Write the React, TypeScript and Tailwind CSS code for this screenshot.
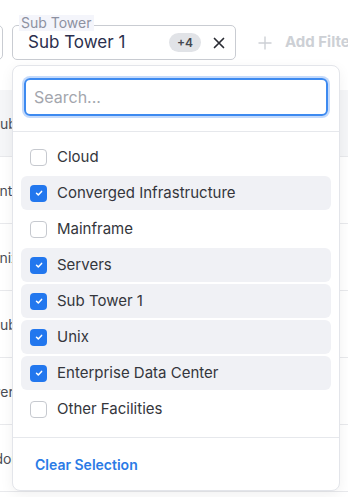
import { useState } from 'react';

const options = [
  'Cloud',
  'Converged Infrastructure',
  'Mainframe',
  'Servers',
  'Sub Tower 1',
  'Unix',
  'Enterprise Data Center',
  'Other Facilities',
];

// filas de la tabla que queda detrás del menú
const rows = [
  { text: 'Enterprise', offset: '-ml-[9px]' },
  { text: 'Unix', offset: '-ml-[11px]' },
  { text: 'Sub Tower 1', offset: '-ml-[9px]' },
  { text: 'Server', offset: '-ml-[30px]' },
  { text: 'Vendor', offset: '-ml-[31px]' },
];

function Check({ on }: { on: boolean }) {
  if (!on) {
    return <span className="w-[17px] h-[17px] rounded-[4px] border-[1.5px] border-[#c6c9cf] bg-white shrink-0" />;
  }
  return (
    <span className="w-[17px] h-[17px] rounded-[4px] bg-[#2277ee] shrink-0 flex items-center justify-center">
      <svg width="10" height="10" viewBox="0 0 10 10" fill="none">
        <path d="M2.5 5.2 4.3 6.9 7.6 3.4" stroke="white" strokeWidth="1.5" strokeLinecap="round" strokeLinejoin="round" />
      </svg>
    </span>
  );
}

export default function App() {
  const [selected, setSelected] = useState<string[]>([
    'Converged Infrastructure',
    'Servers',
    'Sub Tower 1',
    'Unix',
    'Enterprise Data Center',
  ]);

  const toggle = (o: string) =>
    setSelected(s => (s.includes(o) ? s.filter(x => x !== o) : [...s, o]));

  return (
    <div
      className="relative w-[348px] h-[497px] overflow-hidden bg-white"
      style={{ fontFamily: 'Inter, "Noto Sans", sans-serif' }}
    >
      {/* Barra de filtros */}
      <div className="flex items-center pt-[25px] h-[60px]">
        <div className="-ml-[50px] w-[53px] h-[35px] border border-[#c9ccd2] rounded-[5px] shrink-0" />
        <div className="relative ml-[9px] w-[224px] h-[35px] border border-[#c9ccd2] rounded-[5px] flex items-center pl-[15px] pr-[10px] shrink-0">
          <span className="absolute -top-[11px] left-[6px] px-[2px] bg-[#f4f5fb] text-[14px] leading-[16px] text-[#8d91a1]">
            Sub Tower
          </span>
          <span className="text-[17px] text-[#2b2f4d] flex-1">Sub Tower 1</span>
          <span className="h-[19px] w-[32px] rounded-full bg-[#e1e3e7] text-[12px] font-semibold text-[#44474f] flex items-center justify-center">
            +4
          </span>
          <svg className="ml-[12px]" width="12" height="12" viewBox="0 0 12 12">
            <path d="M1.5 1.5 10.5 10.5M10.5 1.5 1.5 10.5" stroke="#2a2c33" strokeWidth="1.7" strokeLinecap="round" />
          </svg>
        </div>
        <div className="ml-[22px] flex items-center gap-[13px] whitespace-nowrap">
          <svg width="14" height="14" viewBox="0 0 14 14">
            <path d="M7 0.5V13.5M0.5 7H13.5" stroke="#cdd0d5" strokeWidth="1.4" />
          </svg>
          <span className="text-[15px] font-bold text-[#cdd0d5]">Add Filter</span>
        </div>
      </div>

      {/* Tabla de fondo */}
      <div className="mt-[30px] text-[14px] text-[#4b4e57]">
        <div className="h-[67px] bg-[#f5f6f8] flex items-center border-b border-[#e8e9ec]">
          <span className="-ml-[9px] whitespace-nowrap">Sub Tower</span>
        </div>
        {rows.map(r => (
          <div key={r.text} className="h-[67px] flex items-center border-b border-[#e8e9ec]">
            <span className={`${r.offset} whitespace-nowrap`}>{r.text}</span>
          </div>
        ))}
      </div>

      {/* Menú desplegable */}
      <div className="absolute left-[12px] top-[65px] w-[328px] h-[426px] bg-white border border-[#e3e5ea] rounded-[8px] shadow-[0_4px_14px_rgba(0,0,0,0.06)] flex flex-col">
        <div className="px-[11px] pt-[12px] pb-[15px] border-b border-[#e6e8ec]">
          <input
            placeholder="Search..."
            className="w-full h-[38px] rounded-[6px] border-2 border-[#3d8af0] ring-2 ring-[#c4dafb] px-[8px] text-[16px] text-[#333] placeholder:text-[#a3a6ad] outline-none"
          />
        </div>
        <div className="px-[8px] pt-[8px] pb-[11px] flex flex-col gap-[2px] border-b border-[#e6e8ec]">
          {options.map(o => {
            const on = selected.includes(o);
            return (
              <button
                key={o}
                onClick={() => toggle(o)}
                className={`h-[34px] rounded-[6px] flex items-center gap-[10px] pl-[9px] text-left ${on ? 'bg-[#f0f1f5]' : ''}`}
              >
                <Check on={on} />
                <span className="text-[15px] text-[#34363c]">{o}</span>
              </button>
            );
          })}
        </div>
        <div className="flex-1 flex items-center px-[22px]">
          <button onClick={() => setSelected([])} className="text-[14px] font-semibold text-[#2a7be6]">
            Clear Selection
          </button>
        </div>
      </div>
    </div>
  );
}
